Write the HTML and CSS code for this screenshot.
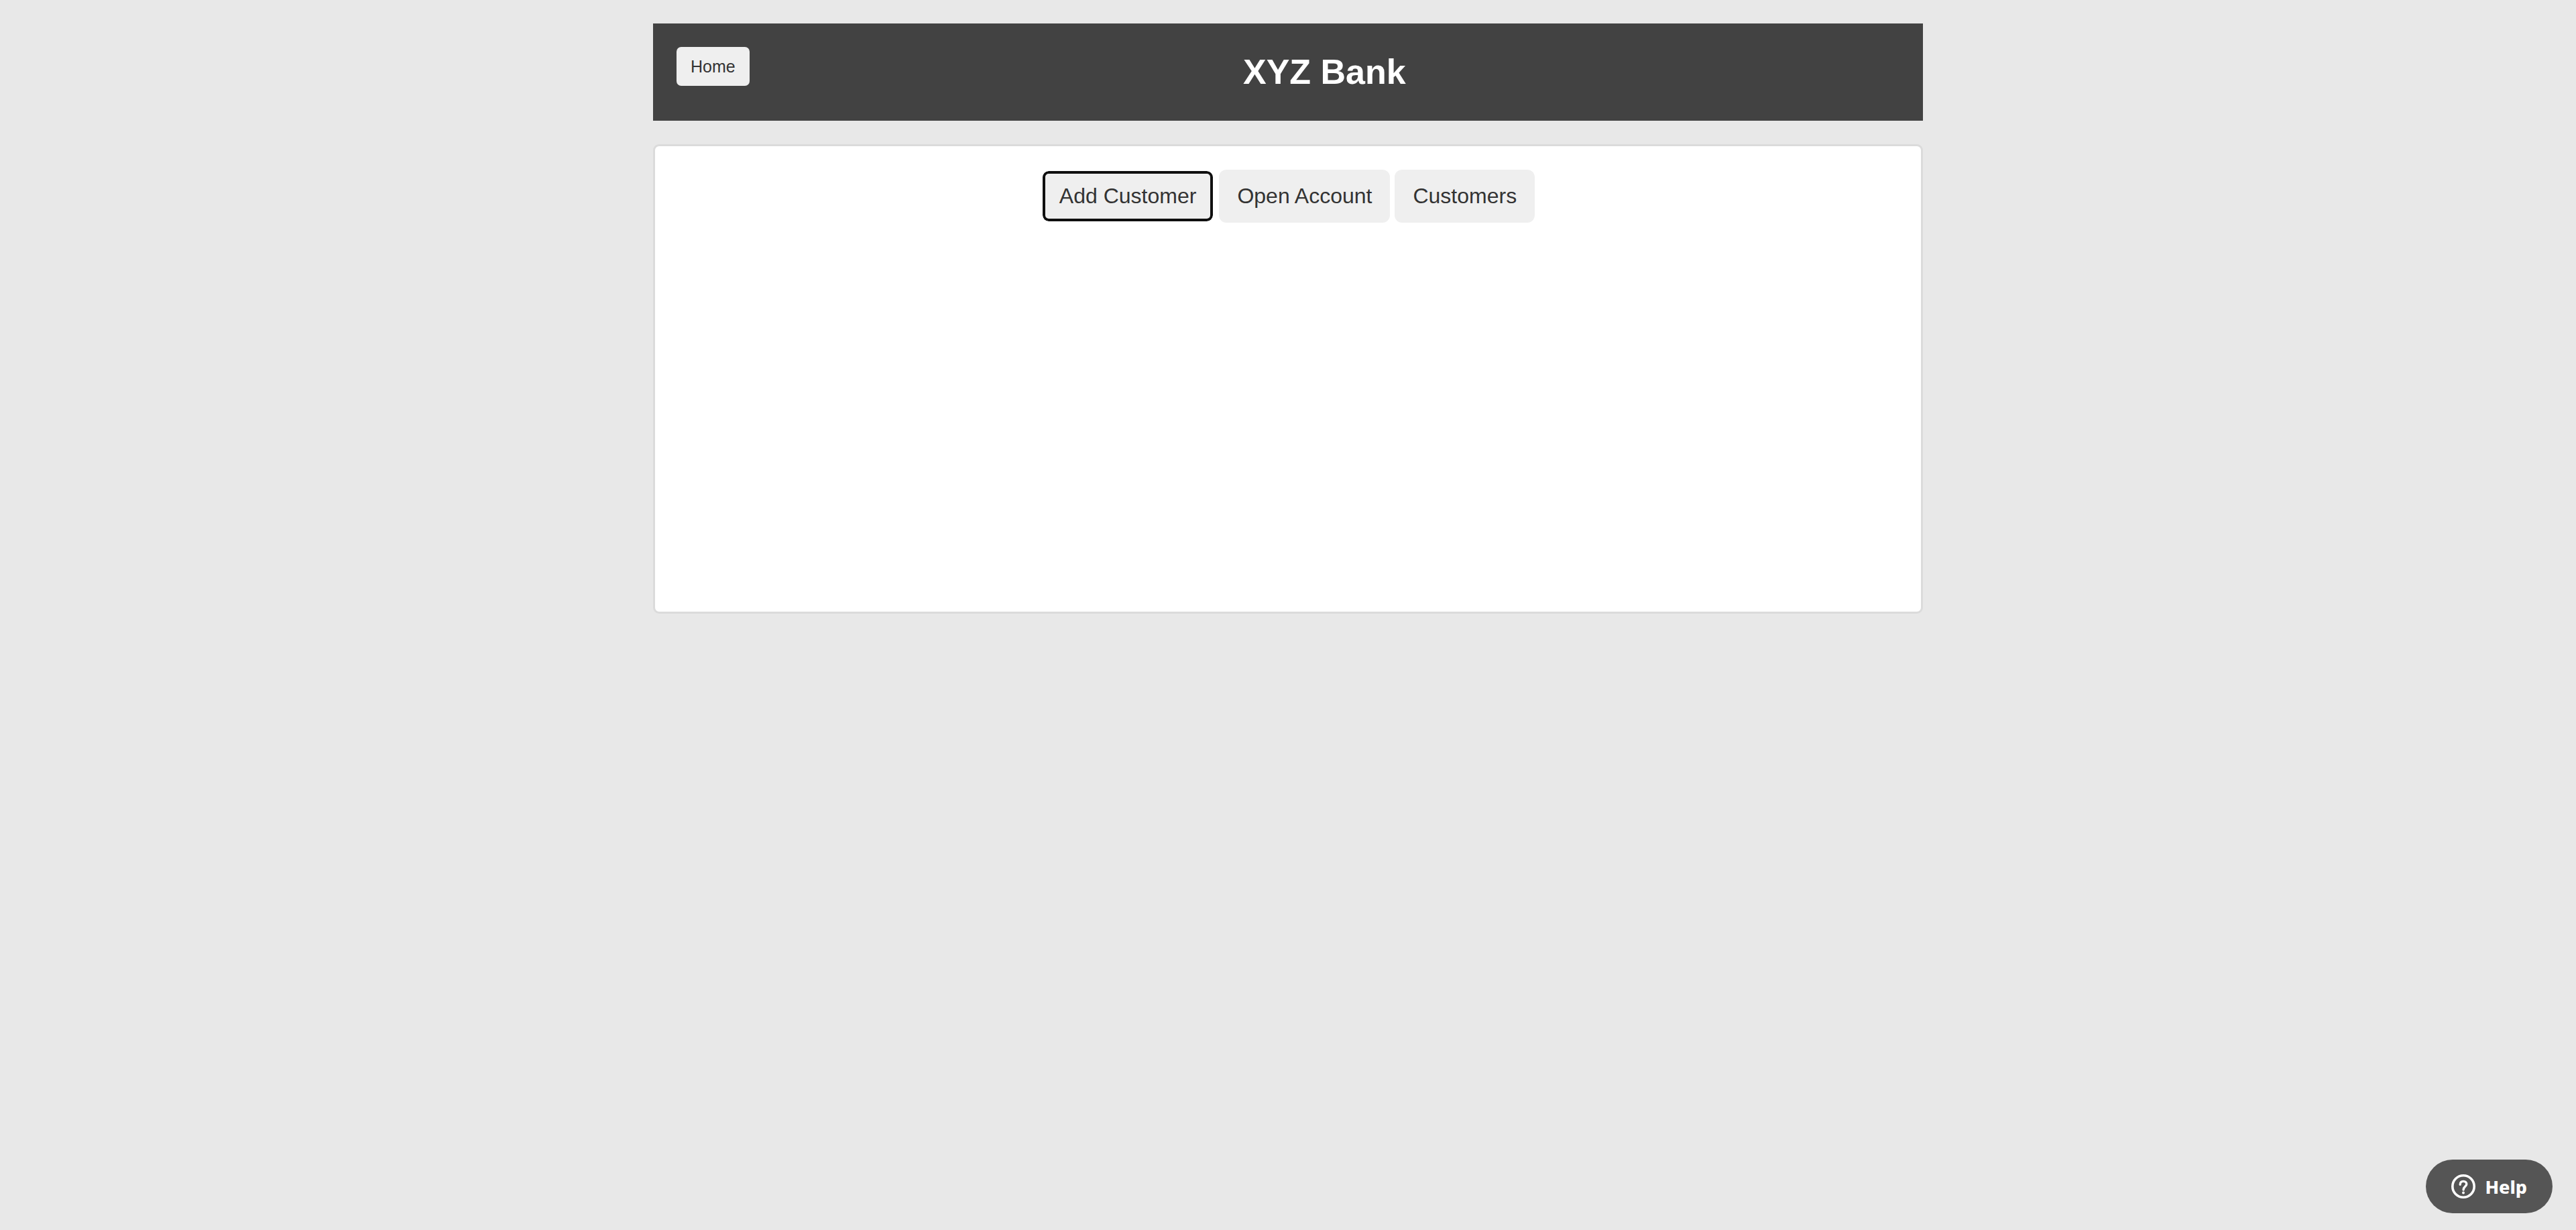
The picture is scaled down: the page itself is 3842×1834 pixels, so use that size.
FILE: index.html
```html
<!DOCTYPE html>
<html lang="en">
<head>
<meta charset="utf-8">
<title>XYZ Bank</title>
<link rel="stylesheet" href="styles.css">
</head>
<body>
<div class="container">
  <header class="main-header">
    <button class="btn home" type="button">Home</button>
    <h1 class="main-heading">XYZ Bank</h1>
  </header>
  <main class="panel">
    <nav class="actions">
      <button class="btn btn-lg is-active" type="button">Add Customer</button>
      <button class="btn btn-lg" type="button">Open Account</button>
      <button class="btn btn-lg" type="button">Customers</button>
    </nav>
  </main>
</div>
<button class="help" type="button">
  <svg class="help-icon" viewBox="0 0 36 36" aria-hidden="true">
    <circle cx="18" cy="18" r="16.2" fill="none" stroke="#fff" stroke-width="3.6"/>
    <path d="M13.2 15.2C13.2 11.8 15.2 10.4 18 10.4C20.8 10.4 22.8 12 22.8 14.6C22.8 18 18.1 18.3 18.1 23" fill="none" stroke="#fff" stroke-width="3.4" stroke-linecap="round"/>
    <circle cx="18" cy="27.4" r="2" fill="#fff"/>
  </svg>
  <span>Help</span>
</button>
</body>
</html>
```
FILE: styles.css
```css
* {
  box-sizing: border-box;
}

body {
  margin: 0;
  padding: 35px;
  background: #e8e8e8;
  color: #333;
  font-family: "Liberation Sans", Arial, sans-serif;
}

.container {
  display: flex;
  flex-direction: column;
  gap: 35px;
  max-width: 1894px;
  margin: 0 auto;
}

.main-header {
  display: flex;
  align-items: flex-start;
  min-height: 145px;
  padding: 35px;
  background: #424242;
}

.main-heading {
  flex: 1;
  margin: 0;
  color: #fff;
  font-size: 52px;
  line-height: 75px;
  text-align: center;
}

.btn {
  border: 0;
  border-radius: 7px;
  padding: 0 21px;
  background: #efefef;
  color: #333;
  font-family: inherit;
  font-size: 25px;
  line-height: 58px;
}

.btn-lg {
  border-radius: 11px;
  padding: 0 27px;
  font-size: 32px;
  line-height: 79px;
}

.is-active {
  border: 2px solid #fff;
  padding: 0 25px;
  line-height: 75px;
  box-shadow: inset 0 0 0 4px #101010;
}

.panel {
  min-height: 700px;
  padding: 35px;
  border: 3px solid #dbdbdb;
  border-radius: 9px;
  background: #fff;
}

.actions {
  display: flex;
  justify-content: center;
  gap: 7px;
}

.help {
  position: fixed;
  right: 35px;
  bottom: 25px;
  display: flex;
  align-items: center;
  gap: 14px;
  height: 80px;
  border: 0;
  border-radius: 40px;
  padding: 0 38px;
  background: #555;
  color: #fff;
  font-family: "Noto Sans", sans-serif;
  font-size: 27px;
  font-weight: 800;
}

.help-icon {
  width: 36px;
  height: 36px;
}
```
